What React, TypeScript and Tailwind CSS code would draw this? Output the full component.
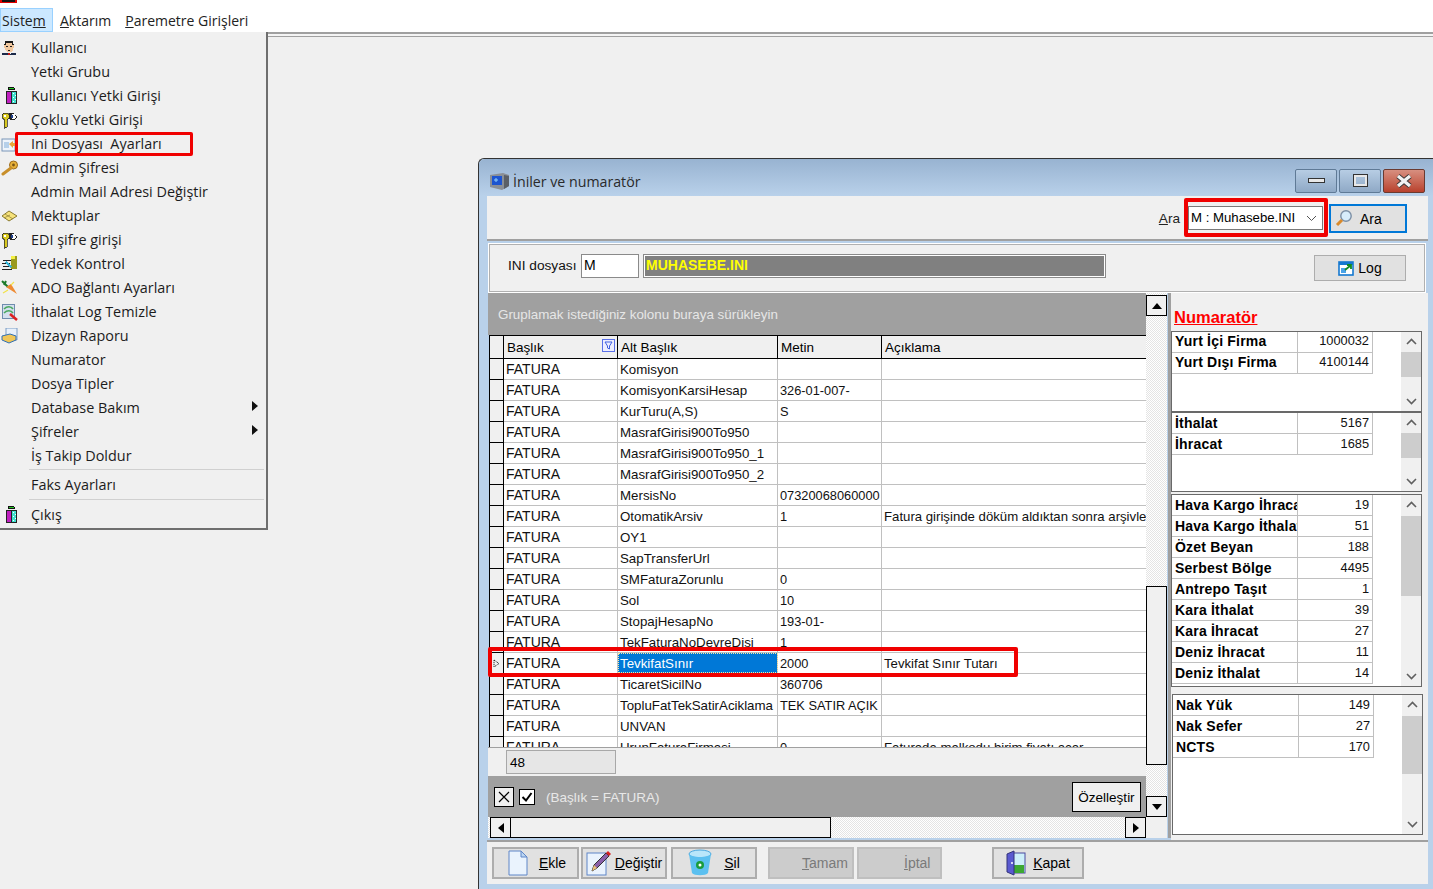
import React from "react";

const Person = () => (
  <svg width="16" height="16" viewBox="0 0 16 16" shapeRendering="crispEdges">
    <path d="M4 1h8v3l1 1v3h-1v2l-2 2H6L4 10V8H3V5l1-1z" fill="#f2c9a0" />
    <path d="M4 1h8v2l1 2h-2V3H5v2H3l1-2z" fill="#1a1a1a" />
    <path d="M5 6h2v1H5zM9 6h2v1H9zM7 10h2v1H7z" fill="#222" />
    <path d="M1 13h4l3 1 3-1h4v2H1z" fill="#1b2a4a" />
    <path d="M7 13h2v2H7z" fill="#c01818" />
  </svg>
);
const Tower = () => (
  <svg width="16" height="18" viewBox="0 0 16 18" shapeRendering="crispEdges" className="ml-[3px]">
    <path d="M4 0h6v1h1v2H4z" fill="#111" />
    <path d="M5 1h5v1H5z" fill="#22c922" />
    <path d="M2 4h11v13H2z" fill="#222" />
    <path d="M3 5h4v11H3z" fill="#c020c0" />
    <path d="M8 5h4v11H8z" fill="#40e0d0" />
    <path d="M9 6h1v1H9zM11 8h1v1h-1zM9 10h1v1H9zM11 12h1v1h-1zM9 14h1v1H9z" fill="#fff" />
  </svg>
);
const KeyEye = () => (
  <svg width="17" height="17" viewBox="0 0 17 17" shapeRendering="crispEdges">
    <path d="M2 1h5v1h1v4H7v1H6v8H4v1H3V7H2V6H1V2h1z" fill="#d8c820" stroke="#222" strokeWidth="0.7" />
    <path d="M3 3h2v2H3z" fill="#fff" />
    <path d="M8 1h4l4 4-3 3H9L8 6z" fill="#222" />
    <path d="M11 2h3l1 3-2 2h-2z" fill="#fff" />
    <path d="M10 3h2v3h-2z" fill="#1c3f8c" />
  </svg>
);
const IniIcon = () => (
  <svg width="16" height="16" viewBox="0 0 16 16">
    <rect x="1" y="3" width="13" height="12" fill="#eef4fb" stroke="#7b96b8" />
    <rect x="3" y="6" width="5" height="6" fill="#b6d0ea" />
    <path d="M8 8l4-3v2h3v3h-3v2z" fill="#e9a53a" />
  </svg>
);
const GoldKey = () => (
  <svg width="18" height="16" viewBox="0 0 18 16">
    <circle cx="12.5" cy="5" r="4" fill="#e8b23a" stroke="#9a6a1e" />
    <circle cx="12.5" cy="5" r="1.4" fill="#7a5416" />
    <path d="M10 8L2 14" stroke="#c88f2a" strokeWidth="3" strokeLinecap="round" />
  </svg>
);
const Env = () => (
  <svg width="17" height="12" viewBox="0 0 17 12">
    <path d="M1 6l7-5 8 5-8 5z" fill="#f6e27a" stroke="#8a7a30" />
    <path d="M4 4l8 5M3 8l6-3" stroke="#8a7a30" strokeWidth="0.7" />
  </svg>
);
const Server = () => (
  <svg width="17" height="16" viewBox="0 0 17 16" shapeRendering="crispEdges">
    <path d="M10 0h6v13h-6z" fill="#9a9a20" />
    <path d="M10 0h4v3h-4z" fill="#f4f040" />
    <path d="M2 4h8v1H2zM1 7h8v1H1zM2 10h8v1H2zM1 13h10v1H1z" fill="#222" />
    <path d="M5 5l6 6-2 1-5-5z" fill="#36b6d8" />
  </svg>
);
const Carrot = () => (
  <svg width="18" height="16" viewBox="0 0 18 16">
    <path d="M1 1l6 6M5 1L3 5" stroke="#1d7a2a" strokeWidth="2" />
    <path d="M5 7l5-3 6 10z" fill="#ee8a33" />
    <path d="M2 13l5-3M13 2l-3 3" stroke="#f2e24a" strokeWidth="1.2" />
  </svg>
);
const LogClean = () => (
  <svg width="17" height="18" viewBox="0 0 17 18">
    <rect x="1.5" y="1.5" width="12" height="14" fill="#d4e0ee" stroke="#6f8cae" />
    <path d="M3 6c3-3 7-3 9 0M3 10c3-3 7-3 9 0" stroke="#4aa860" strokeWidth="1.6" fill="none" />
    <path d="M9 11l7 6" stroke="#d22" strokeWidth="2.5" />
  </svg>
);
const Report = () => (
  <svg width="18" height="16" viewBox="0 0 18 16">
    <path d="M5 0h11v12H5z" fill="#e8f0fa" stroke="#7b9cc4" />
    <path d="M1 8l8-2 6 2v4l-7 3-7-3z" fill="#f0c658" stroke="#2f6fb5" />
  </svg>
);

const items: { t: string; i?: React.ReactNode; s?: boolean }[] = [
  { t: "Kullanıcı", i: <Person /> },
  { t: "Yetki Grubu" },
  { t: "Kullanıcı Yetki Girişi", i: <Tower /> },
  { t: "Çoklu Yetki Girişi", i: <KeyEye /> },
  { t: "Ini Dosyası  Ayarları", i: <IniIcon /> },
  { t: "Admin Şifresi", i: <GoldKey /> },
  { t: "Admin Mail Adresi Değiştir" },
  { t: "Mektuplar", i: <Env /> },
  { t: "EDI şifre girişi", i: <KeyEye /> },
  { t: "Yedek Kontrol", i: <Server /> },
  { t: "ADO Bağlantı Ayarları", i: <Carrot /> },
  { t: "İthalat Log Temizle", i: <LogClean /> },
  { t: "Dizayn Raporu", i: <Report /> },
  { t: "Numarator" },
  { t: "Dosya Tipler" },
  { t: "Database Bakım", s: true },
  { t: "Şifreler", s: true },
  { t: "İş Takip Doldur" },
];

const MenuRow = ({ t, i, s }: { t: string; i?: React.ReactNode; s?: boolean }) => (
  <div className="flex h-[24px] items-center relative">
    <div className="w-[31px] pl-[1px] flex items-center justify-start shrink-0">{i}</div>
    <span className="whitespace-pre">{t}</span>
    {s && (
      <svg className="absolute left-[252px] top-[5px]" width="6" height="10" viewBox="0 0 6 10">
        <path d="M0 0l6 5-6 5z" fill="#111" />
      </svg>
    )}
  </div>
);

const rows: [string, string, string, boolean?][] = [
  ["Komisyon", "", ""],
  ["KomisyonKarsiHesap", "326-01-007-", ""],
  ["KurTuru(A,S)", "S", ""],
  ["MasrafGirisi900To950", "", ""],
  ["MasrafGirisi900To950_1", "", ""],
  ["MasrafGirisi900To950_2", "", ""],
  ["MersisNo", "07320068060000", ""],
  ["OtomatikArsiv", "1", "Fatura girişinde döküm aldıktan sonra arşivle"],
  ["OY1", "", ""],
  ["SapTransferUrl", "", ""],
  ["SMFaturaZorunlu", "0", ""],
  ["Sol", "10", ""],
  ["StopajHesapNo", "193-01-", ""],
  ["TekFaturaNoDevreDisi", "1", ""],
  ["TevkifatSınır", "2000", "Tevkifat Sınır Tutarı", true],
  ["TicaretSicilNo", "360706", ""],
  ["TopluFatTekSatirAciklama", "TEK SATIR AÇIK", ""],
  ["UNVAN", "", ""],
  ["UrunFaturaFirmasi", "0", "Faturada malkodu birim fiyatı acar"],
];

const Chev = ({ up }: { up?: boolean }) => (
  <svg width="11" height="7" viewBox="0 0 11 7">
    <path d={up ? "M1 6l4.5-4.5L10 6" : "M1 1l4.5 4.5L10 1"} stroke="#606060" strokeWidth="1.6" fill="none" />
  </svg>
);

const Box = ({
  data,
  cls,
  thumbTop,
  thumbH,
  up,
}: {
  data: [string, string][];
  cls: string;
  thumbTop: number;
  thumbH: number;
  up?: boolean;
}) => (
  <div className={"border border-[#696969] bg-white flex shrink-0 relative " + cls}>
    <div className="w-[201px]">
      {data.map(([a, b]) => (
        <div
          key={a}
          className={
            "flex h-[21px] w-[201px] border-b border-[#c0c0c0] " + (up ? "leading-[18px]" : "leading-[20px]")
          }
        >
          <div className="w-[126px] shrink-0 border-r border-[#c0c0c0] pl-[3px] font-bold text-[14px] tracking-[0.2px] overflow-hidden whitespace-nowrap text-black">
            {a}
          </div>
          <div className="w-[75px] shrink-0 border-r border-[#c0c0c0] pr-[3px] text-right text-[12.8px] text-[#111]">{b}</div>
        </div>
      ))}
    </div>
    <div className="absolute right-0 top-0 bottom-0 w-[20px] bg-[#f0f0f0] flex flex-col items-center justify-between py-[6px]">
      <Chev up />
      <Chev />
      <div className="absolute left-0 right-0 bg-[#cdcdcd]" style={{ top: thumbTop, height: thumbH }} />
    </div>
  </div>
);

const Btn = ({
  children,
  cls,
  dis,
}: {
  children: React.ReactNode;
  cls: string;
  dis?: boolean;
}) => (
  <div
    className={
      "h-[32px] border-2 flex items-center justify-center text-[14px] shrink-0 " +
      (dis ? "bg-[#cccccc] border-[#bfbfbf] text-[#7a7a7a] " : "bg-[#e1e1e1] border-[#adadad] text-black ") +
      cls
    }
  >
    {children}
  </div>
);

const ArrowBtn = ({ d, cls }: { d: string; cls: string }) => (
  <div className={"bg-[#f0f0f0] border border-black flex items-center justify-center shrink-0 box-border " + cls}>
    <svg width="12" height="12" viewBox="0 0 12 12">
      <path d={d} fill="#000" />
    </svg>
  </div>
);

const track = "bg-[repeating-conic-gradient(#e4e4e4_0_25%,#ffffff_0_50%)] bg-[length:2px_2px]";

export default function App() {
  return (
    <div
      className="relative w-[1433px] h-[889px] overflow-hidden bg-[#f0f0f0] text-black"
      style={{ fontFamily: '"Liberation Sans", Arial, sans-serif' }}
    >
      {/* top strip */}
      <div className="h-[8px] bg-white relative">
        <div className="absolute left-0 top-0 w-[17px] h-[3px] bg-[#111] border-x-2 border-b border-[#e00000]" />
      </div>
      <div
        className="h-[24px] bg-white flex items-center text-[14px] text-[#222]"
        style={{ fontFamily: '"Open Sans", "Noto Sans", sans-serif' }}
      >
        <div className="w-[53px] h-[24px] bg-[#cce8ff] border border-[#99d1ff] pl-[1px] leading-[24px]">
          Siste<u>m</u>
        </div>
        <div className="ml-[7px]">
          <u>A</u>ktarım
        </div>
        <div className="ml-[14px]">
          <u>P</u>aremetre Girişleri
        </div>
      </div>
      <div className="h-[5px] border-t-2 border-b border-t-[#a0a0a0] border-b-[#a0a0a0] bg-[#f4f4f4]" />

      {/* popup menu */}
      <div
        className="absolute left-0 top-[32px] w-[268px] h-[498px] bg-[#f0f0f0] border-r-2 border-b-2 border-[#6e6e6e] pt-[4px] text-[14.4px] text-[#1c1c1c]"
        style={{ fontFamily: '"Open Sans", "Noto Sans", sans-serif' }}
      >
        {items.map((m) => (
          <MenuRow key={m.t} {...m} />
        ))}
        <div className="h-[2px] flex items-end">
          <div className="ml-[29px] mr-[2px] flex-1 h-[1px] bg-[#d0d0d0]" />
        </div>
        <div className="h-[24px] mt-[3px] flex items-center">
          <span className="ml-[31px]">Faks Ayarları</span>
        </div>
        <div className="h-[3px] flex items-end">
          <div className="ml-[29px] mr-[2px] flex-1 h-[1px] bg-[#d0d0d0]" />
        </div>
        <div className="mt-[3px]">
          <MenuRow t="Çıkış" i={<Tower />} />
        </div>
        <div className="absolute left-[15px] top-[100px] w-[178px] h-[24px] border-[3px] border-[#f00000] rounded-[2px]" />
      </div>

      {/* window */}
      <div className="absolute left-[478px] top-[158px] w-[955px] h-[731px] rounded-tl-[6px] border-t border-l border-[#333] bg-[#b9d1ea] flex flex-col pl-[8px] pr-[5px] text-[13.5px]">
        <div className="h-[37px] shrink-0 -ml-[8px] -mr-[5px] pl-[10px] pr-[8px] bg-gradient-to-b from-[#98b3d1] to-[#b9d1ea] flex items-center relative rounded-tl-[6px]">
          <svg width="22" height="20" viewBox="0 0 22 20" className="mt-[8px]">
            <path d="M1 3l13-2 6 2v11l-7 4-12-3z" fill="#8a8f96" />
            <rect x="3" y="4" width="10" height="9" fill="#1d55d0" />
            <path d="M15 3l5 1v10l-5 3z" fill="#5a5f66" />
            <path d="M5 8h4M7 6v4" stroke="#8fd0ff" strokeWidth="1" />
          </svg>
          <span className="ml-[2px] mt-[8px] text-[14.2px] text-[#2a2a2a]" style={{ fontFamily: '"Open Sans", sans-serif' }}>
            İniler ve numaratör
          </span>
          <div className="ml-auto flex gap-[2px] items-center pt-[6px]">
            <div className="w-[42px] h-[24px] rounded-[2px] border border-[#5f7a96] bg-gradient-to-b from-[#b7cde4] to-[#8fa9c6] flex items-center justify-center">
              <div className="w-[17px] h-[5px] bg-[#e8e8e8] border border-[#333]" />
            </div>
            <div className="w-[42px] h-[24px] rounded-[2px] border border-[#5f7a96] bg-gradient-to-b from-[#b7cde4] to-[#8fa9c6] flex items-center justify-center">
              <div className="w-[15px] h-[13px] border-[3px] border-[#e8e8e8] outline outline-[#333] -outline-offset-1" />
            </div>
            <div className="w-[42px] h-[24px] rounded-[2px] border border-[#6a3a30] bg-gradient-to-b from-[#d78f80] to-[#b8402c] flex items-center justify-center">
              <svg width="18" height="14" viewBox="0 0 18 14">
                <path d="M3 2l12 10M15 2L3 12" stroke="#333" strokeWidth="5" />
                <path d="M3 2l12 10M15 2L3 12" stroke="#f2f2f2" strokeWidth="3.4" />
              </svg>
            </div>
          </div>
        </div>

        {/* toolbar */}
        <div className="h-[45px] shrink-0 bg-[#f0f0f0] border-b-2 border-[#a0a0a0] flex items-center justify-end pr-[21px] relative">
          <div className="mr-[8px] text-[13.6px] pt-[4px] text-[#222]">
            <u>A</u>ra
          </div>
          <div className="w-[135px] h-[24px] mt-[1px] bg-white border border-[#7a7a7a] flex items-center pl-[2px] text-[13.2px] relative">
            M : Muhasebe.INI
            <svg className="absolute right-[5px] top-[8px]" width="11" height="7" viewBox="0 0 11 7">
              <path d="M1 1l4.5 4.5L10 1" stroke="#555" strokeWidth="1" fill="none" />
            </svg>
          </div>
          <div className="ml-[6px] w-[78px] h-[29px] mt-[1px] bg-[#e1e1e1] border-2 border-[#0078d7] flex items-center text-[14px]">
            <svg className="ml-[4px]" width="18" height="18" viewBox="0 0 18 18">
              <circle cx="11" cy="7" r="5.2" fill="#d7ecfb" stroke="#7a8ea5" strokeWidth="1.4" />
              <path d="M7 11l-5 5" stroke="#d98a2b" strokeWidth="3" />
            </svg>
            <span className="ml-[7px] pt-[2px]">Ara</span>
          </div>
          <div className="absolute left-[697px] top-[2px] w-[144px] h-[39px] border-[4px] border-[#f00000] rounded-[2px]" />
        </div>

        {/* ini panel */}
        <div className="h-[50px] shrink-0 mt-[2px] ml-[1px] mr-[2px] border border-white outline outline-[#b0b0b0] -outline-offset-2 bg-[#f0f0f0] flex items-center pl-[19px] relative">
          <span className="w-[73px] -mt-[4px] text-[13.7px] text-[#111]">INI dosyası</span>
          <div className="w-[58px] -mt-[5px] h-[24px] bg-white border border-[#8a8a8a] pl-[2px] text-[14px] leading-[20px]">M</div>
          <div className="ml-[4px] -mt-[5px] w-[463px] h-[24px] border border-[#8a8a8a] p-[1px] bg-white">
            <div className="h-full bg-[#808080] text-[#ffff00] font-bold text-[14px] leading-[18px] pl-[1px]">MUHASEBE.INI</div>
          </div>
          <Btn cls="ml-[208px] w-[92px] !h-[26px] !border">
            <svg width="16" height="16" viewBox="0 0 16 16" className="mr-[4px]">
              <rect x="1" y="2" width="14" height="13" fill="#fff" stroke="#1478d0" strokeWidth="1.6" />
              <rect x="1" y="2" width="14" height="3" fill="#1478d0" />
              <rect x="3" y="8" width="5" height="5" fill="#4aa3e8" />
              <path d="M7 10l5-4M9 5h4v4" stroke="#108a20" strokeWidth="1.8" fill="none" />
            </svg>
            Log
          </Btn>
        </div>

        {/* main */}
        <div className="h-[547px] shrink-0 flex">
          <div className="w-[680px] ml-[1px] shrink-0 flex flex-col">
            <div className="flex h-[524px] shrink-0">
              <div className="w-[658px] shrink-0 flex flex-col">
                <div className="h-[42px] shrink-0 bg-[#a0a0a0] text-[#e6e6e6] flex items-center pl-[10px] pt-[2px] text-[13.4px]">
                  Gruplamak istediğiniz kolonu buraya sürükleyin
                </div>
                <div className="h-[412px] shrink-0 overflow-hidden bg-white border-l border-t border-black ml-[1px]">
                  <div className="flex h-[23px] bg-[#f0f0f0] border-b border-black leading-[23px]">
                    <div className="w-[14px] border-r border-black shrink-0" />
                    <div className="w-[114px] border-r border-black pl-[3px] shrink-0 relative">
                      Başlık
                      <svg className="absolute right-[2px] top-[3px]" width="13" height="13" viewBox="0 0 13 13">
                        <rect x="0.5" y="0.5" width="12" height="12" fill="#eef" stroke="#5a70e8" />
                        <path d="M3 3h7L7.5 7v3L5.5 9V7z" fill="none" stroke="#4060e0" />
                      </svg>
                    </div>
                    <div className="w-[160px] border-r border-black pl-[3px] shrink-0">Alt Başlık</div>
                    <div className="w-[104px] border-r border-black pl-[3px] shrink-0">Metin</div>
                    <div className="flex-1 pl-[3px]">Açıklama</div>
                  </div>
                  {rows.map(([a, b, c, sel]) => (
                    <div key={a} className="flex h-[21px] border-b border-[#c0c0c0] leading-[21px] text-[#111]">
                      <div className="w-[14px] shrink-0 bg-[#f0f0f0] border-r border-r-black border-b border-b-black -mb-[1px] flex items-center justify-center">
                        {sel && (
                          <svg width="7" height="9" viewBox="0 0 7 9">
                            <path d="M1 1l5 3.5L1 8z" fill="none" stroke="#000" strokeDasharray="1 1" />
                          </svg>
                        )}
                      </div>
                      <div className="w-[114px] shrink-0 border-r border-[#c0c0c0] pl-[2px] whitespace-nowrap overflow-hidden text-[14px]">FATURA</div>
                      <div
                        className={
                          "w-[160px] shrink-0 border-r border-[#c0c0c0] pl-[2px] whitespace-nowrap overflow-hidden text-[13.3px] " +
                          (sel ? "bg-[#0078d7] text-white outline-1 outline-dotted -outline-offset-1 outline-[#ffe9a0]" : "")
                        }
                      >
                        {a}
                      </div>
                      <div className="w-[104px] shrink-0 border-r border-[#c0c0c0] pl-[2px] whitespace-nowrap overflow-hidden text-[12.8px]">{b}</div>
                      <div className="flex-1 min-w-0 pl-[2px] whitespace-nowrap overflow-hidden text-[13.2px]">{c}</div>
                    </div>
                  ))}
                </div>
                <div className="h-[29px] shrink-0 bg-[#f0f0f0] border-t border-[#a0a0a0] pl-[18px] pt-[2px]">
                  <div className="w-[110px] h-[24px] border border-[#a8a8a8] bg-[#e6e6e6] pl-[3px] leading-[23px]">48</div>
                </div>
                <div className="h-[41px] shrink-0 bg-[#a0a0a0] flex items-center pl-[6px] relative">
                  <div className="w-[20px] h-[20px] border border-black bg-[#f0f0f0] flex items-center justify-center">
                    <svg width="12" height="12" viewBox="0 0 12 12">
                      <path d="M1 1l10 10M11 1L1 11" stroke="#000" strokeWidth="1.2" />
                    </svg>
                  </div>
                  <div className="ml-[5px] w-[16px] h-[16px] border border-black bg-white flex items-center justify-center">
                    <svg width="12" height="12" viewBox="0 0 12 12">
                      <path d="M1.5 6l3.5 3.5L10.5 2" stroke="#000" strokeWidth="2" fill="none" />
                    </svg>
                  </div>
                  <span className="ml-[11px] pt-[3px] text-[#e8e8e8]">(Başlık = FATURA)</span>
                  <div className="ml-auto mr-[5px] w-[69px] h-[30px] border border-black bg-[#f0f0f0] flex items-center justify-center pt-[3px]">Özelleştir</div>
                </div>
              </div>
              <div className={"w-[21px] shrink-0 flex flex-col pt-[2px] " + track}>
                <ArrowBtn d="M1 9L6 3l5 6z" cls="h-[21px] w-[21px]" />
                <div className="h-[270px] shrink-0" />
                <div className="h-[179px] w-[21px] border border-black bg-[#f0f0f0] shrink-0" />
                <div className="h-[31px] shrink-0" />
                <ArrowBtn d="M1 3l5 6 5-6z" cls="h-[21px] w-[21px]" />
              </div>
            </div>
            <div className="flex h-[21px] shrink-0">
              <div className={"w-[658px] shrink-0 flex pl-[2px] " + track}>
                <ArrowBtn d="M9 1L3 6l6 5z" cls="w-[21px] h-[21px]" />
                <div className="w-[320px] h-[21px] border-y border-r border-black bg-[#f0f0f0] shrink-0" />
                <div className="flex-1" />
                <ArrowBtn d="M3 1l6 5-6 5z" cls="w-[21px] h-[21px]" />
              </div>
              <div className="w-[21px] bg-[#f0f0f0]" />
            </div>
          </div>
          <div className="w-[3px] shrink-0 bg-[#a0a0a0] h-[545px]" />
          <div className="flex-1 bg-[#f0f0f0] flex flex-col">
            <div className="h-[38px] shrink-0 flex items-end text-[#ff0000] font-bold text-[16.5px] underline pl-[3px] leading-[20px] pb-[4px]">
              Numaratör
            </div>
            <Box
              up
              cls="w-[251px] h-[81px]"
              thumbTop={20}
              thumbH={25}
              data={[
                ["Yurt İçi Firma", "1000032"],
                ["Yurt Dışı Firma", "4100144"],
              ]}
            />
            <Box
              cls="w-[251px] h-[80px]"
              thumbTop={20}
              thumbH={25}
              data={[
                ["İthalat", "5167"],
                ["İhracat", "1685"],
              ]}
            />
            <Box
              cls="w-[251px] h-[193px] mt-[2px]"
              thumbTop={21}
              thumbH={80}
              data={[
                ["Hava Kargo İhracat", "19"],
                ["Hava Kargo İthalat", "51"],
                ["Özet Beyan", "188"],
                ["Serbest Bölge", "4495"],
                ["Antrepo Taşıt", "1"],
                ["Kara İthalat", "39"],
                ["Kara İhracat", "27"],
                ["Deniz İhracat", "11"],
                ["Deniz İthalat", "14"],
              ]}
            />
            <Box
              cls="w-[251px] h-[141px] mt-[7px] ml-[1px]"
              thumbTop={21}
              thumbH={58}
              data={[
                ["Nak Yük", "149"],
                ["Nak Sefer", "27"],
                ["NCTS", "170"],
              ]}
            />
          </div>
        </div>

        {/* bottom */}
        <div className="h-[44px] shrink-0 bg-[#f0f0f0] border-t-2 border-[#a0a0a0] flex items-center pl-[5px]">
          <Btn cls="w-[87px] pl-[2px]">
            <svg width="22" height="26" viewBox="0 0 22 26" className="mr-[10px]">
              <path d="M2 1h12l6 6v18H2z" fill="#eaf3fd" stroke="#5f86c8" />
              <path d="M14 1v6h6z" fill="#bcd6f2" stroke="#5f86c8" />
            </svg>
            <span><u>E</u>kle</span>
          </Btn>
          <Btn cls="w-[86px] ml-[2px]">
            <svg width="26" height="26" viewBox="0 0 26 26" className="mr-[3px]">
              <rect x="1" y="3" width="19" height="22" fill="#eaf3fd" stroke="#5f86c8" />
              <path d="M6 21l2-6L20 3l3 3L11 18z" fill="#8a5fa8" stroke="#333" />
              <path d="M20 3l2-2 3 3-2 2z" fill="#d82020" />
              <path d="M6 21l2-6 3 3z" fill="#e9c07a" />
            </svg>
            <span><u>D</u>eğiştir</span>
          </Btn>
          <Btn cls="w-[86px] ml-[4px]">
            <svg width="24" height="28" viewBox="0 0 24 28" className="mr-[12px]">
              <ellipse cx="12" cy="5" rx="11" ry="4" fill="#b9e6fa" stroke="#4aa8e0" />
              <path d="M1 5l3 19c2 3 14 3 16 0l3-19c-3 4-19 4-22 0z" fill="#5cc0f0" />
              <circle cx="12" cy="16" r="4" fill="#1a9c3c" />
              <circle cx="12" cy="16" r="1.5" fill="#fff" />
            </svg>
            <span><u>S</u>il</span>
          </Btn>
          <Btn dis cls="w-[86px] ml-[11px] pl-[32px] !justify-start">
            <span><u>T</u>amam</span>
          </Btn>
          <Btn dis cls="w-[85px] ml-[3px] pl-[45px] !justify-start">
            <span><u>İ</u>ptal</span>
          </Btn>
          <Btn cls="w-[92px] ml-[50px]">
            <svg width="20" height="26" viewBox="0 0 20 26" className="mr-[7px]">
              <rect x="6" y="3" width="13" height="20" fill="#cdeffa" stroke="#4a4aa0" />
              <rect x="8" y="15" width="10" height="8" fill="#3ca832" />
              <path d="M1 4l7-3v24l-7-3z" fill="#5a5ad0" stroke="#33337a" />
              <circle cx="6" cy="13" r="1" fill="#fff" />
            </svg>
            <span><u>K</u>apat</span>
          </Btn>
        </div>

        {/* row highlight */}
        <div className="absolute left-[9px] top-[488px] w-[530px] h-[30px] border-[4px] border-[#f00000] rounded-[2px]" />
      </div>
    </div>
  );
}
